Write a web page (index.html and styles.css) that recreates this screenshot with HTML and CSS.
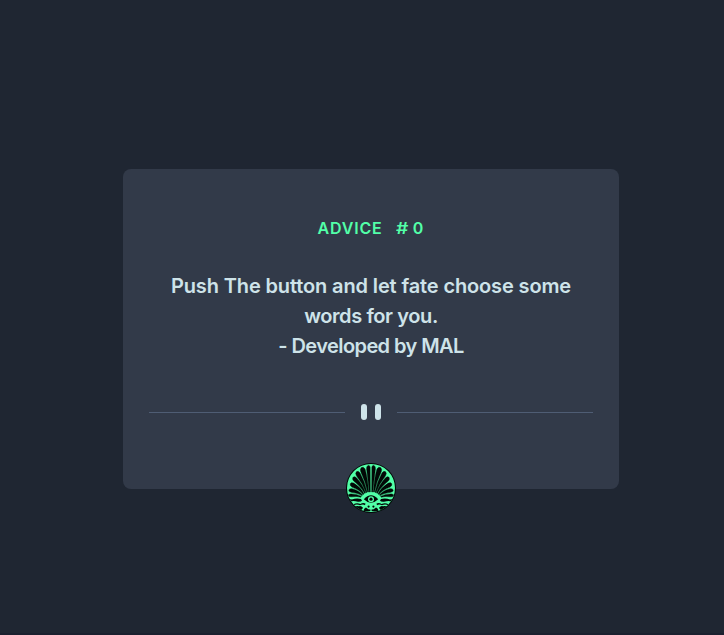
FILE: index.html
```html
<!DOCTYPE html>
<html lang="en">
<head>
<meta charset="utf-8">
<title>Advice generator</title>
<link rel="stylesheet" href="styles.css">
</head>
<body>
<main class="card">
  <h1 class="title"><span>ADVICE</span><span class="number"><span class="hash">#</span>0</span></h1>
  <p class="advice"><span class="line-one">Push The button and let fate choose some</span><br><span>words for you.</span><br><span class="line-three">- Developed by MAL</span></p>
  <div class="divider"><span class="rule"></span><span class="bar"></span><span class="bar"></span><span class="rule"></span></div>
  <button class="fate" aria-label="New advice">
    <svg viewBox="0 0 50 50" width="50" height="50">
      <defs>
        <clipPath id="disc"><circle cx="25" cy="25" r="24"/></clipPath>
        <g id="fan">
          <path d="M25.7 29 L25.9 4 Q26.3 2.2 27.8 2.5 Q29.7 3 29.4 6 Q27.6 19 26.7 29Z"/>
          <path d="M27.4 29 Q28.5 14 31 6 Q32.2 3.5 34.5 4.5 Q36.3 5.8 35.3 8.5 Q30.3 19 28.4 29Z"/>
          <path d="M29 29.3 Q31 19 36 10 Q37.7 7.4 39.6 8.8 Q41 10.5 39.5 12.8 Q33 21 30 29.5Z"/>
          <path d="M30.5 30 Q33 22 39.4 14.9 Q41.7 12.7 43.1 14.4 Q44 16.2 42.3 18 Q35 23.5 31.5 30.3Z"/>
          <path d="M32 31 Q35.5 24 42.4 20.1 Q45 18.9 45.8 20.9 Q46.1 22.9 44 24.1 Q36.3 27 33 31.5Z"/>
          <path d="M33.4 32 Q37 27.6 44 25.7 Q47 25.3 47.2 27.3 Q47.2 29 44.7 29.3 Q37.5 30 34.3 32.6Z"/>
          <path d="M34.7 33.4 Q39 30.7 45.4 30.9 Q48 31.2 47.7 32.7 Q47 34 44.4 33.8 Q38.5 33 35.3 34.2Z"/>
        </g>
        <g id="scroll">
          <path d="M35 36 Q40 35 44 36.6 L47 36 L45.5 38.4 Q42 37.5 38 38.8 Q35 39 34 37.8Z"/>
          <path d="M30.5 40.4 Q33 39.3 35.6 41 Q39 39.5 42.6 41.2 L42 42.1 Q39 40.7 36 42.2 Q33 41 31 42.2Z"/>
          <path d="M33 44.7 Q34.8 42.4 37 43.2 Q39.5 42.6 42 43.7 L39 46.5 Q34.5 48.5 33 44.7Z"/>
          <path d="M30 44.5 Q31.7 45 32.5 47.8 L29 48.5 L25.6 48 L25.6 46.6 Q28 46.8 30 44.5Z"/>
          <circle cx="27.4" cy="43.6" r="1.1"/>
        </g>
      </defs>
      <circle cx="25" cy="25" r="25" class="ink"/>
      <circle cx="25" cy="25" r="24" class="mint"/>
      <g class="ink" clip-path="url(#disc)">
        <g class="rays">
          <use href="#fan"/>
          <use href="#fan" transform="matrix(-1 0 0 1 50 0)"/>
        </g>
        <use href="#scroll"/>
        <use href="#scroll" transform="matrix(-1 0 0 1 50 0)"/>
      </g>
      <path class="brow" d="M16.5 33.7 Q20 30.6 25 30.6 Q30 30.6 33.5 33.7"/>
      <path class="ink" d="M17.8 36.3 Q25 28.4 32.2 36.3 Q25 43.4 17.8 36.3Z"/>
      <circle cx="25" cy="36.2" r="3" class="mint"/>
      <circle cx="25" cy="36.2" r="1.6" class="ink"/>
    </svg>
  </button>
</main>
</body>
</html>
```

FILE: styles.css
```css
* { box-sizing: border-box; }
body {
  margin: 0;
  min-height: 635px;
  padding: 169px 0 0 123px;
  background: #1f2632;
  border-bottom: 2px solid #1b202f;
  font-family: Inter, "Liberation Sans", sans-serif;
}
.card {
  display: flex;
  flex-direction: column;
  align-items: center;
  width: 496px;
  height: 320px;
  padding: 47px 26px 0;
  border-radius: 8px;
  background: #323a49;
}
.title {
  display: flex;
  gap: 13px;
  margin: 0;
  font-size: 16px;
  font-weight: 600;
  line-height: 24px;
  letter-spacing: 0.8px;
  color: #52ffa8;
}
.number { letter-spacing: 3px; margin-right: -2px; }
.hash {
  display: inline-block;
  margin-right: 4px;
  transform: scaleX(1.2);
  transform-origin: left;
}
.advice {
  margin: 31px 0 0;
  font-size: 20px;
  font-weight: 600;
  line-height: 30px;
  letter-spacing: -0.4px;
  text-align: center;
  white-space: nowrap;
  color: #cee3e9;
}
.line-one { letter-spacing: -0.13px; }
.line-three { letter-spacing: -0.58px; }
.divider {
  display: flex;
  align-items: center;
  width: 100%;
  height: 16px;
  margin-top: 43px;
}
.rule { flex: 1; height: 1px; background: #4f5d74; }
.bar { width: 6px; height: 16px; border-radius: 3px; background: #cee3e9; }
.bar:nth-child(2) { margin: 0 8px 0 16px; }
.bar:nth-child(3) { margin-right: 16px; }
.fate {
  width: 50px;
  height: 50px;
  margin-top: 43px;
  padding: 0;
  border: 0;
  border-radius: 50%;
  background: none;
  flex: none;
}
.fate svg { display: block; }
.ink { fill: #020806; }
.mint { fill: #52ffa8; }
.rays { stroke: #020806; stroke-width: 0.45; }
.brow { fill: none; stroke: #52ffa8; stroke-width: 1.3; }
```
